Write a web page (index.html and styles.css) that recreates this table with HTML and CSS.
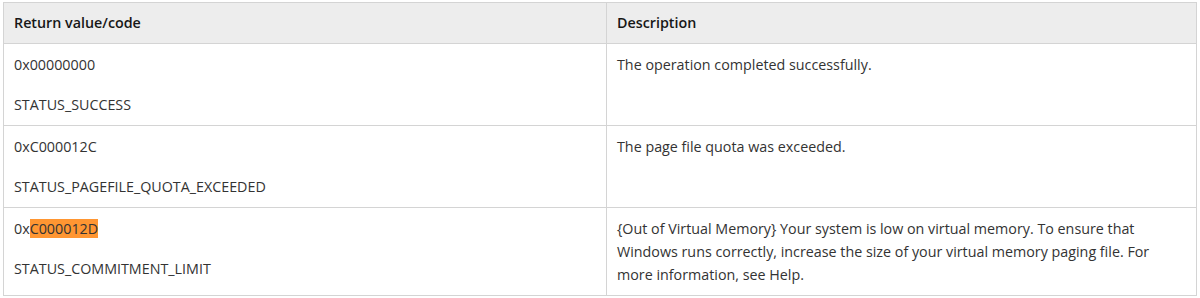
FILE: index.html
```html
<!DOCTYPE html>
<html lang="en">
  <head>
    <meta charset="UTF-8" />
    <title>Return values</title>
    <link rel="stylesheet" href="styles.css">
  </head>
  <body>
    <table class="codes">
      <thead>
        <tr>
          <th class="col-code">Return value/code</th>
          <th>Description</th>
        </tr>
      </thead>
      <tbody>
        <tr>
          <td>
            <p>0x00000000</p>
            <p>STATUS_SUCCESS</p>
          </td>
          <td>
            <p>The operation completed successfully.</p>
          </td>
        </tr>
        <tr>
          <td>
            <p>0xC000012C</p>
            <p>STATUS_PAGEFILE_QUOTA_EXCEEDED</p>
          </td>
          <td>
            <p>The page file quota was exceeded.</p>
          </td>
        </tr>
        <tr>
          <td>
            <p>0x<mark class="hit">C000012D</mark></p>
            <p>STATUS_COMMITMENT_LIMIT</p>
          </td>
          <td>
            <p>{Out of Virtual Memory} Your system is low on virtual memory. To ensure that Windows runs correctly, increase the size of your virtual memory paging file. For more information, see Help.</p>
          </td>
        </tr>
      </tbody>
    </table>
  </body>
</html>
```

FILE: styles.css
```css
body {
  margin: 0;
  padding: 2px 0 0 3px;
  background: #fff;
  font-family: "Open Sans", "Noto Sans", sans-serif;
  font-size: 14.3px;
  color: #333;
}

.codes {
  width: 1194px;
  border-collapse: collapse;
  table-layout: fixed;
}

.codes th,
.codes td {
  border: 1px solid #d4d4d4;
  text-align: left;
  vertical-align: top;
}

.codes th {
  background-color: #ededed;
  color: #171717;
  font-weight: 600;
  padding: 9px 10px 9px;
  line-height: 22px;
}

.col-code {
  width: 582px;
}

.codes td {
  padding: 9px 10px 9px;
  line-height: 23px;
}

.codes p {
  margin: 0 0 17px;
}

.codes p:last-child {
  margin-bottom: 0;
}

.hit {
  background-color: #ff9632;
  color: inherit;
}
```
